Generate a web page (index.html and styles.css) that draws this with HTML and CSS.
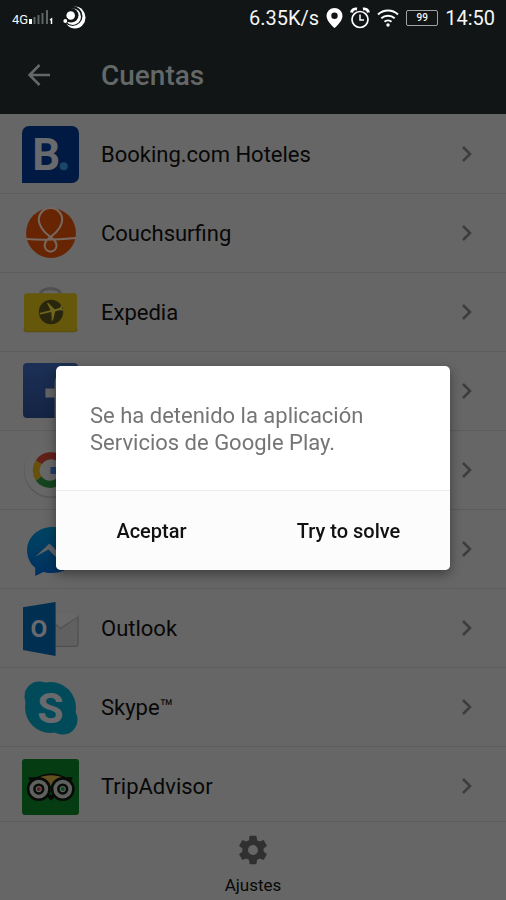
FILE: index.html
```html
<!DOCTYPE html>
<html lang="es">
<head>
<meta charset="utf-8">
<meta name="viewport" content="width=device-width, initial-scale=1">
<title>Cuentas</title>
<link rel="stylesheet" href="styles.css">
</head>
<body>
<div class="status">
  <div class="status-group">
    <svg width="42" height="20" viewBox="0 0 42 20" aria-hidden="true">
      <text class="network" x="0" y="16">4G</text>
      <path d="M17 11h3v5h-3z" fill="#fff"/>
      <path d="M21.500 9h2v7h-2zM25.500 7h2v9h-2zM29.500 5h2v11h-2zM34 2h2v14h-2z" fill="#5e6363"/>
      <path d="M38 12l1.500-1v5" fill="none" stroke="#fff" stroke-width="1.500"/>
    </svg>
    <svg class="carrier" width="24" height="24" viewBox="0 0 24 24" aria-hidden="true">
      <ellipse cx="13" cy="11.500" rx="10.500" ry="11" fill="#fff"/>
      <ellipse cx="10.500" cy="10" rx="10" ry="10" fill="#111515"/>
      <ellipse cx="10.700" cy="10.700" rx="8.300" ry="8.300" fill="#fff"/>
      <ellipse cx="9" cy="9.300" rx="7.500" ry="7.300" fill="#111515"/>
      <circle cx="8.700" cy="9.500" r="4.300" fill="#fff"/>
      <circle cx="3.300" cy="14.500" r="3" fill="#111515"/>
      <circle cx="3.300" cy="15" r="1.900" fill="#fff"/>
    </svg>
  </div>
  <div class="status-group status-right">
    <span>6.35K/s</span>
    <svg width="17" height="20" viewBox="0 0 17 20" aria-hidden="true">
      <path fill="#fff" fill-rule="evenodd" d="M8.500 0A8 8 0 0 0 .5 8c0 5.500 8 12 8 12s8-6.500 8-12a8 8 0 0 0-8-8zm0 4.500a3.200 3.200 0 1 1 0 6.400 3.200 3.200 0 0 1 0-6.400z"/>
    </svg>
    <svg width="20" height="22" viewBox="0 0 20 22" fill="none" stroke="#fff" aria-hidden="true">
      <circle cx="10" cy="12.500" r="8" stroke-width="1.700"/>
      <path d="M10 7.500v5.500h4" stroke-width="1.500"/>
      <path d="M1.500 5.500C2 3 4.500 1.500 7 2M18.500 5.500C18 3 15.500 1.500 13 2" stroke-width="3"/>
    </svg>
    <svg width="22" height="18" viewBox="0 0 22 18" fill="none" stroke="#fff" stroke-width="2" aria-hidden="true">
      <path d="M1 5.500a14.500 14.500 0 0 1 20 0M4.300 9.300a9.800 9.800 0 0 1 13.400 0M7.500 12.800a5.200 5.200 0 0 1 7 0"/>
      <circle cx="11" cy="16" r="1.700" fill="#fff" stroke="none"/>
    </svg>
    <span class="battery">99</span>
    <span>14:50</span>
  </div>
</div>

<header class="appbar">
  <button class="back" type="button" aria-label="Atrás">
    <svg width="24" height="24" viewBox="0 0 24 24" fill="none" stroke="#646868" stroke-width="2.500">
      <path d="M23 12H3M12.500 2L2.500 12l10 10"/>
    </svg>
  </button>
  <h1>Cuentas</h1>
</header>

<main class="list">
  <a class="row" href="#booking">
    <svg class="logo" viewBox="0 0 56 56" aria-hidden="true">
      <path d="M0 56V7a7 7 0 0 1 7-7h42a7 7 0 0 1 7 7v42a7 7 0 0 1-7 7z" fill="#001a43"/>
      <text class="mark booking" x="10" y="43">B</text>
      <circle cx="41" cy="39.500" r="4" fill="#1b4667"/>
    </svg>
    <span class="name">Booking.com Hoteles</span>
    <svg class="chevron" viewBox="0 0 12 18" aria-hidden="true"><path d="M2 2l7 7-7 7"/></svg>
  </a>
  <a class="row" href="#couchsurfing">
    <svg class="logo" viewBox="0 0 56 56" aria-hidden="true">
      <circle cx="28.500" cy="27.500" r="24.500" fill="#672504"/>
      <path d="M4 33.500q24 1.500 49-1M28 31.500C20 26 16.500 19 16.500 14.500a11.500 11.500 0 0 1 23 0C39.500 19 36 26 28 31.500c-4 2.500-5.700 6-5.700 8.500a5.800 5.800 0 0 0 11.600 0c0-2.500-1.900-6-5.900-8.500z" fill="none" stroke="#77695f" stroke-width="2"/>
    </svg>
    <span class="name">Couchsurfing</span>
    <svg class="chevron" viewBox="0 0 12 18" aria-hidden="true"><path d="M2 2l7 7-7 7"/></svg>
  </a>
  <a class="row" href="#expedia">
    <svg class="logo" viewBox="0 0 56 56" aria-hidden="true">
      <path d="M18 10c1-7 19-7 20 0" fill="none" stroke="#505052" stroke-width="3"/>
      <rect x="2" y="9" width="52" height="38" rx="3" fill="#66580b"/>
      <path d="M2 44a3 3 0 0 0 3 3h46a3 3 0 0 0 3-3" fill="none" stroke="#574b0c"/>
      <circle cx="28.500" cy="27.500" r="12" fill="#2a260e"/>
      <path d="M17 28.500l11-2.800-3.500-7 1.200-.3 6.300 6.300 5-1.200 1.800-2.500.7.200-.3 3 2 1.300-.7.600-3.800-.4-4 1.100-2.200 9-1.200.3-.5-8.700L18 30z" fill="#6e651e"/>
    </svg>
    <span class="name">Expedia</span>
    <svg class="chevron" viewBox="0 0 12 18" aria-hidden="true"><path d="M2 2l7 7-7 7"/></svg>
  </a>
  <a class="row" href="#facebook" aria-label="Facebook">
    <svg class="logo" viewBox="0 0 56 56" aria-hidden="true">
      <defs><linearGradient id="fb" x2="0" y2="1"><stop stop-color="#1c3056"/><stop offset="1" stop-color="#142444"/></linearGradient></defs>
      <rect x="1" y="0" width="54" height="54" rx="4" fill="url(#fb)"/>
      <path d="M23 25h9v-5c0-7 4-11 11-11h5v8h-4c-4 0-4 2-4 5v3h8l-1 9h-7v20h-8V34h-9z" fill="#626466"/>
    </svg>
    <span class="name"></span>
    <svg class="chevron" viewBox="0 0 12 18" aria-hidden="true"><path d="M2 2l7 7-7 7"/></svg>
  </a>
  <a class="row" href="#google" aria-label="Google">
    <svg class="logo" viewBox="0 0 56 56" aria-hidden="true">
      <circle cx="28" cy="29" r="26" fill="#585858"/>
      <circle cx="28" cy="28" r="25.500" fill="#676767"/>
      <g fill="none" stroke-width="7">
        <path d="M16.500 20a14 14 0 0 1 22-2" stroke="#612119"/>
        <path d="M16.500 36a14 14 0 0 1 0-16" stroke="#67500b"/>
        <path d="M37 38a14 14 0 0 1-20.500-2" stroke="#14451f"/>
        <path d="M28 28h14c0 4-2 8-5 10" stroke="#203c68"/>
      </g>
    </svg>
    <span class="name"></span>
    <svg class="chevron" viewBox="0 0 12 18" aria-hidden="true"><path d="M2 2l7 7-7 7"/></svg>
  </a>
  <a class="row" href="#messenger" aria-label="Messenger">
    <svg class="logo" viewBox="0 0 56 56" aria-hidden="true">
      <defs><linearGradient id="ms" x2="0" y2="1"><stop stop-color="#004563"/><stop offset="1" stop-color="#003061"/></linearGradient></defs>
      <path d="M30 6C16 6 5 16 5 29c0 7 3 13 8 17v8l8-4c3 1 6 1 9 1 14 0 25-9 25-22S44 6 30 6z" fill="url(#ms)"/>
      <path d="M13 35l14-13 7 7 13-7-14 13-7-7z" fill="#606366"/>
    </svg>
    <span class="name"></span>
    <svg class="chevron" viewBox="0 0 12 18" aria-hidden="true"><path d="M2 2l7 7-7 7"/></svg>
  </a>
  <a class="row" href="#outlook">
    <svg class="logo" viewBox="0 0 56 56" aria-hidden="true">
      <rect x="30" y="15" width="25" height="31" rx="2" fill="#606060"/>
      <path d="M33 45.500h20a2 2 0 0 0 2-2V16L38 28l-6-5" fill="none" stroke="#505050" stroke-width="1.200"/>
      <path d="M33 14h22v2L38 27l-5-4z" fill="#686868"/>
      <path d="M1 7l32-5v53L1 49z" fill="#002f51"/>
      <text class="mark outlook" x="16.500" y="36" text-anchor="middle">O</text>
    </svg>
    <span class="name">Outlook</span>
    <svg class="chevron" viewBox="0 0 12 18" aria-hidden="true"><path d="M2 2l7 7-7 7"/></svg>
  </a>
  <a class="row" href="#skype">
    <svg class="logo" viewBox="0 0 56 56" aria-hidden="true">
      <circle cx="28" cy="28" r="25" fill="#004a5a"/>
      <circle cx="17" cy="17" r="14.500" fill="#004a5a"/>
      <circle cx="40" cy="40" r="14.500" fill="#004a5a"/>
      <text class="mark skype" x="28" y="43" text-anchor="middle">S</text>
    </svg>
    <span class="name">Skype™</span>
    <svg class="chevron" viewBox="0 0 12 18" aria-hidden="true"><path d="M2 2l7 7-7 7"/></svg>
  </a>
  <a class="row" href="#tripadvisor">
    <svg class="logo" viewBox="0 0 56 56" aria-hidden="true">
      <rect y="1" width="56" height="55" rx="3" fill="#063c11"/>
      <path d="M6 19h8c9-5 20-5 29 0h7l-3 6H9z" fill="#080a08"/>
      <path d="M16 19.500c7-3.500 18-3.500 25 0-7 0-11 4-12.500 8.500C27 23.500 23 19.500 16 19.500z" fill="#63501f"/>
      <path d="M23 36h11l-5.500 6z" fill="#080a08"/>
      <g fill="#5f615f" stroke="#080a08" stroke-width="2.500">
        <circle cx="16.500" cy="30.500" r="10.500"/>
        <circle cx="40" cy="30.500" r="10.500"/>
        <circle cx="16.500" cy="30.500" r="4.300"/>
        <circle cx="40" cy="30.500" r="4.300"/>
      </g>
      <circle cx="16.500" cy="30.500" r="2" fill="#5a1c20"/>
      <circle cx="40" cy="30.500" r="2" fill="#0a4a20"/>
    </svg>
    <span class="name">TripAdvisor</span>
    <svg class="chevron" viewBox="0 0 12 18" aria-hidden="true"><path d="M2 2l7 7-7 7"/></svg>
  </a>
</main>

<footer class="toolbar">
  <button class="settings" type="button">
    <svg width="34" height="34" viewBox="0 0 24 24" aria-hidden="true">
      <path fill="#303030" d="M19.430 12.980c.04-.32.07-.64.07-.98s-.03-.66-.07-.98l2.110-1.650c.19-.15.24-.42.12-.64l-2-3.460c-.12-.22-.39-.3-.61-.22l-2.490 1c-.52-.4-1.080-.73-1.690-.98l-.38-2.650C14.460 2.180 14.250 2 14 2h-4c-.25 0-.46.18-.49.42l-.38 2.650c-.61.25-1.170.59-1.690.98l-2.490-1c-.23-.09-.49 0-.61.22l-2 3.460c-.13.22-.07.49.12.64l2.110 1.650c-.04.32-.07.65-.07.98s.03.66.07.98l-2.110 1.650c-.19.15-.24.42-.12.64l2 3.460c.12.22.39.3.61.22l2.490-1c.52.4 1.080.73 1.690.98l.38 2.650c.03.24.24.42.49.42h4c.25 0 .46-.18.49-.42l.38-2.650c.61-.25 1.170-.59 1.690-.98l2.490 1c.23.09.49 0 .61-.22l2-3.460c.12-.22.07-.49-.12-.64l-2.110-1.650zM12 15.500c-1.930 0-3.500-1.570-3.500-3.500s1.570-3.500 3.500-3.500 3.500 1.570 3.500 3.500-1.570 3.500-3.500 3.500z"/>
    </svg>
    <span>Ajustes</span>
  </button>
</footer>

<div class="overlay">
  <section class="dialog" role="alertdialog" aria-modal="true" aria-describedby="message">
    <p id="message">Se ha detenido la aplicación Servicios de Google Play.</p>
    <div class="actions">
      <button type="button">Aceptar</button>
      <button type="button">Try to solve</button>
    </div>
  </section>
</div>
</body>
</html>
```
FILE: styles.css
```css
* {
  box-sizing: border-box;
}

body {
  margin: 0;
  height: 100vh;
  display: flex;
  flex-direction: column;
  overflow: hidden;
  background: #666;
  color: #080808;
  font-family: Roboto, "Liberation Sans", sans-serif;
}

svg {
  display: block;
  flex: none;
}

button {
  margin: 0;
  padding: 0;
  border: 0;
  background: none;
  color: inherit;
  font-family: inherit;
}

.status {
  flex: none;
  display: flex;
  align-items: center;
  justify-content: space-between;
  height: 36px;
  padding: 0 11px 0 12px;
  background: #111515;
  color: #f4f6f6;
  font-size: 20px;
}

.status-group {
  display: flex;
  align-items: center;
  gap: 8px;
}

.status-right {
  gap: 7px;
}

.network {
  fill: #f4f6f6;
  font-size: 13px;
}

.battery {
  width: 32px;
  height: 16px;
  border: 1px solid #a0a4a4;
  border-radius: 2px;
  font-size: 10px;
  font-weight: 500;
  line-height: 14px;
  text-align: center;
}

.appbar {
  flex: none;
  display: flex;
  align-items: center;
  height: 78px;
  background: #111515;
  color: #646868;
}

.back {
  width: 101px;
  padding-left: 27px;
}

h1 {
  margin: 0;
  font-size: 28px;
  font-weight: 500;
}

.list {
  flex: 1;
  min-height: 0;
  padding-top: 1px;
  overflow: hidden;
}

.row {
  display: flex;
  align-items: center;
  height: 79px;
  padding: 0 33px 0 22px;
  border-bottom: 1px solid #5c5c5c;
  color: inherit;
  text-decoration: none;
}

.logo {
  width: 57px;
  height: 57px;
}

.name {
  flex: 1;
  padding-left: 22px;
  font-size: 22px;
}

.chevron {
  width: 12px;
  height: 18px;
  fill: none;
  stroke: #3d3d3d;
  stroke-width: 2.500;
}

.mark {
  fill: #686a6e;
  font-weight: 700;
}

.booking {
  font-size: 43px;
}

.outlook {
  font-size: 24px;
}

.skype {
  font-size: 42px;
}

.toolbar {
  flex: none;
  display: flex;
  justify-content: center;
  height: 79px;
  border-top: 1px solid #5c5c5c;
}

.settings {
  display: flex;
  flex-direction: column;
  align-items: center;
  gap: 8px;
  padding-top: 11px;
  font-size: 17px;
}

.overlay {
  position: fixed;
  inset: 36px 0 0;
  display: flex;
  align-items: center;
  justify-content: center;
  padding: 0 56px;
}

.dialog {
  width: 100%;
  max-width: 480px;
  overflow: hidden;
  border-radius: 5px;
  background: #fff;
  box-shadow: 0 4px 12px rgba(0, 0, 0, 0.4);
}

.dialog p {
  margin: 0;
  padding: 36px 34px 34px;
  color: #757575;
  font-size: 22px;
  line-height: 27px;
}

.actions {
  display: grid;
  grid-template-columns: 1fr 1fr;
  height: 80px;
  border-top: 1px solid #ebebeb;
  background: #fcfcfc;
}

.actions button {
  padding-right: 6px;
  color: #111;
  font-size: 20px;
  font-weight: 500;
}
```
